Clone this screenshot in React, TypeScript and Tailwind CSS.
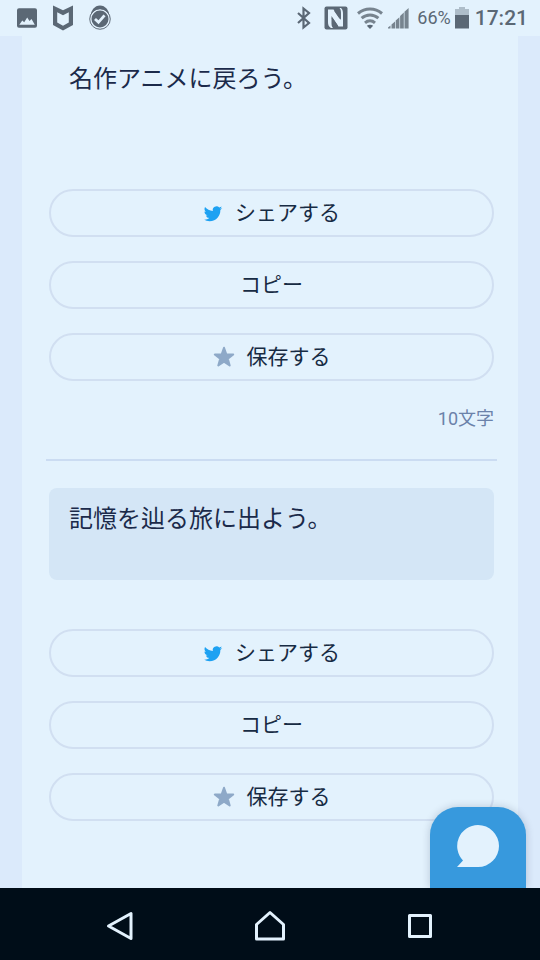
import type { ReactNode } from "react";

interface Entry {
  text: string;
  count?: string;
}

const entries: Entry[] = [
  { text: "名作アニメに戻ろう。", count: "10文字" },
  { text: "記憶を辿る旅に出よう。" },
];

function StatusBar() {
  return (
    <header className="flex h-9 items-center justify-between pr-3 pl-4 text-[#5b6875]">
      <div className="flex items-center gap-3">
        <svg width="22" height="24" viewBox="0 0 22 24" aria-hidden="true">
          <path
            fill="currentColor"
            fillRule="evenodd"
            d="M3 2.200h16a2 2 0 0 1 2 2v15.600a2 2 0 0 1-2 2H3a2 2 0 0 1-2-2V4.200a2 2 0 0 1 2-2zM3.300 18.800h15.500l-3.300-5.800-2 2-2.300-3.500-3 4.800-1.900-1.800z"
          />
        </svg>
        <svg width="26" height="26" viewBox="-1 0 24 26" aria-hidden="true">
          <path
            fill="currentColor"
            fillRule="evenodd"
            d="M1 .5l10 4.800L21 .5v19.500l-10 5.500-10-5.500zM5.200 7.300v10.300l5.800 3.200 5.800-3.200V7.300L11 10.200z"
          />
        </svg>
        <svg width="24" height="26" viewBox="0 0 24 26" aria-hidden="true">
          <ellipse cx="12" cy="12" rx="9.600" ry="11.500" fill="currentColor" />
          <circle cx="12" cy="14" r="9.200" fill="currentColor" stroke="#e3f2fd" strokeWidth="1.400" />
          <path d="M7 14l3.500 3.300 6-7" fill="none" stroke="#e3f2fd" strokeWidth="2.800" />
          <circle cx="12" cy="14" r="10.300" fill="none" stroke="currentColor" strokeWidth=".9" />
        </svg>
      </div>
      <div className="flex items-center">
        <svg width="16" height="24" viewBox="0 0 16 24" className="mr-3" aria-hidden="true">
          <path
            fill="none"
            stroke="currentColor"
            strokeWidth="2.200"
            d="M2 7l11 10-5.500 4.500V2.500L13 7 2 17"
          />
        </svg>
        <svg width="24" height="24" viewBox="0 0 24 24" className="mr-2" aria-hidden="true">
          <rect x=".5" y=".5" width="23" height="23" rx="2" fill="currentColor" />
          <path
            fill="#e3f2fd"
            d="M4 3.500h5.500L17 14V8c0-2.500 0-4.500-1.500-6H17c1.800 1.500 2 3.500 2 6v12.500h-4.500L7.500 10v6c0 2.500 0 4.500 1.500 6H7c-2.500-1.500-3-3.500-3-6z"
          />
          <path stroke="currentColor" strokeWidth="1.200" d="M10.500 4.500l5.500 8M8 12l5.500 8" />
        </svg>
        <svg width="28" height="24" viewBox="0 0 28 24" className="mr-1 text-[#77848f]" aria-hidden="true">
          <g fill="none" stroke="currentColor" strokeWidth="3">
            <path d="M2 7.500c7-6 17-6 24 0" />
            <path d="M5.600 12.200c5-4.300 11.800-4.300 16.800 0" />
            <path d="M9 16.800c3-2.600 7-2.600 10 0" />
          </g>
          <path fill="#5b6875" d="M10.800 19.800q3.200-2 6.400 0L14 23z" />
        </svg>
        <svg width="21" height="22" viewBox="0 0 21 22" className="mr-2 text-[#77848f]" aria-hidden="true">
          <path
            fill="currentColor"
            d="M0 21.500v-1l2.500-2v3zM3.500 17.500l3.500-2.900v6.900H3.500zM7.700 13.500l3.700-3.300v11.300H7.700zM12.100 9l3.700-3.400v15.900h-3.700zM16.500 4.800l4.100-3.800v20.500h-4.100z"
          />
        </svg>
        <span className="mr-1 text-[18px] leading-6">66%</span>
        <svg width="14" height="22" viewBox="0 0 14 22" className="mr-1.5" aria-hidden="true">
          <path fill="#aebdc9" d="M4 0h6v2h4v7H0V2h4z" />
          <path fill="currentColor" d="M0 8h14v13.500H0z" />
        </svg>
        <span className="text-[21px] leading-6 font-medium">17:21</span>
      </div>
    </header>
  );
}

function TwitterIcon() {
  return (
    <svg width="20" height="20" viewBox="-1 -2 26 26" aria-hidden="true">
      <path
        fill="#1da1f2"
        d="M23.950 4.570a10 10 0 0 1-2.820.770 4.960 4.960 0 0 0 2.160-2.720c-.950.560-2 .960-3.130 1.180a4.920 4.920 0 0 0-8.380 4.480C7.690 8.090 4.070 6.130 1.640 3.160a4.820 4.820 0 0 0-.670 2.480c0 1.710.870 3.210 2.190 4.100a4.900 4.900 0 0 1-2.230-.620v.060a4.920 4.920 0 0 0 3.950 4.830 5 5 0 0 1-2.210.080 4.940 4.940 0 0 0 4.600 3.420A9.870 9.870 0 0 1 0 19.540a13.990 13.990 0 0 0 7.550 2.210c9.050 0 14-7.500 14-13.980 0-.210 0-.420-.020-.630a9.940 9.940 0 0 0 2.460-2.550z"
      />
    </svg>
  );
}

function StarIcon() {
  return (
    <svg width="22" height="22" viewBox="0 0 22 22" aria-hidden="true">
      <path
        fill="#8ea9c8"
        stroke="#8ea9c8"
        strokeWidth="2"
        strokeLinejoin="round"
        d="M11 1.800l2.300 6.500 6.900.200-5.400 4.300 1.900 6.700-5.700-3.900-5.700 3.900 1.900-6.700L1.800 8.500l6.900-.200z"
      />
    </svg>
  );
}

function PillButton({ icon, children }: { icon?: ReactNode; children: ReactNode }) {
  return (
    <button
      type="button"
      className="flex h-12 w-full items-center justify-center gap-3 rounded-full border-2 border-[#d1dff1] text-[21px] leading-6 text-[#172b43]"
    >
      {icon}
      <span>{children}</span>
    </button>
  );
}

function EntryItem({ text, count }: Entry) {
  return (
    <li>
      <p
        className={
          count
            ? "min-h-[92px] rounded-lg px-5 py-[13px] text-[24px] leading-9 text-[#1b2a4a]"
            : "min-h-[92px] rounded-lg bg-[#d4e6f6] px-5 py-[13px] text-[24px] leading-9 text-[#1b2a4a]"
        }
      >
        {text}
      </p>
      <div className="mt-[49px] flex flex-col gap-6">
        <PillButton icon={<TwitterIcon />}>シェアする</PillButton>
        <PillButton>コピー</PillButton>
        <PillButton icon={<StarIcon />}>保存する</PillButton>
      </div>
      {count && (
        <>
          <p className="mt-6 text-right text-[18px] leading-7 text-[#6b82aa]">{count}</p>
          <hr className="-mx-[3px] mt-[26px] mb-[27px] border-t-2 border-[#cbdcf2]" />
        </>
      )}
    </li>
  );
}

function NavBar() {
  return (
    <nav className="flex h-[72px] items-center justify-center gap-[118px] bg-[#000d18] pt-1 text-[#e3f2fd]">
      <button type="button" aria-label="戻る">
        <svg width="32" height="32" viewBox="0 0 32 32" fill="none" stroke="currentColor" strokeWidth="3" strokeLinejoin="round">
          <path d="M4.500 16L27 3.500v25z" />
        </svg>
      </button>
      <button type="button" aria-label="ホーム">
        <svg width="32" height="32" viewBox="0 0 32 32" fill="none" stroke="currentColor" strokeWidth="3" strokeLinejoin="round">
          <path d="M16 2.500l13.500 12v14.500h-27V14.500z" />
        </svg>
      </button>
      <button type="button" aria-label="アプリ履歴">
        <svg width="32" height="32" viewBox="0 0 32 32" fill="none" stroke="currentColor" strokeWidth="3" strokeLinejoin="round">
          <rect x="5.500" y="5.500" width="21" height="21" />
        </svg>
      </button>
    </nav>
  );
}

export default function App() {
  return (
    <div className="flex min-h-screen flex-col bg-[#e3f2fd] font-['Roboto','Noto_Sans_CJK_JP',sans-serif]">
      <StatusBar />
      <main className="relative flex flex-1 overflow-hidden bg-[#dbeafb] px-[22px]">
        <ul lang="ja" className="flex-1 bg-[#e3f2fd] pt-3 pr-6 pb-[66px] pl-[27px]">
          {entries.map((entry) => (
            <EntryItem key={entry.text} {...entry} />
          ))}
        </ul>
        <button
          type="button"
          aria-label="チャット"
          className="absolute right-3.5 bottom-0 flex h-[81px] w-24 items-center justify-center rounded-t-[28px] bg-[#3799dd] pb-1 shadow-[0_0_8px_rgba(0,30,60,0.2)]"
        >
          <svg width="44" height="44" viewBox="0 0 44 44" aria-hidden="true">
            <path fill="#e3f2fd" d="M22 1a21 21 0 1 1 0 42H1l6-6.500A21 21 0 0 1 22 1z" />
          </svg>
        </button>
      </main>
      <NavBar />
    </div>
  );
}
